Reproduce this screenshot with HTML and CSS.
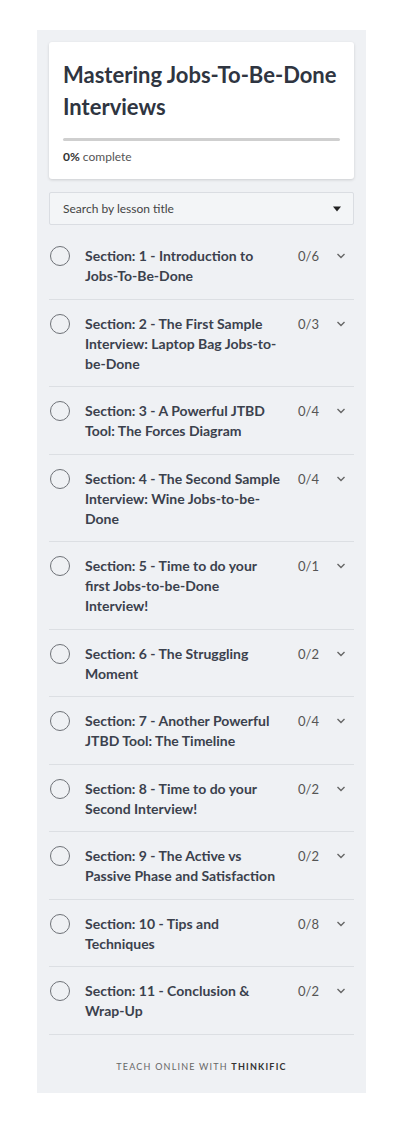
FILE: index.html
```html
<!DOCTYPE html>
<html>
<head>
<meta charset="utf-8">
<link rel="stylesheet" href="styles.css">
</head>
<body>
<div class="panel">
  <div class="card">
    <h1 class="title">Mastering Jobs-To-Be-Done Interviews</h1>
    <div class="bar"></div>
    <div class="progress"><b>0%</b> complete</div>
  </div>
  <div class="search">
    <span>Search by lesson title</span>
    <svg class="caret" width="10" height="6" viewBox="0 0 10 6"><path d="M1 0.5h8L5 5.5z" fill="#222"/></svg>
  </div>
  <ul class="list">
    <li class="row"><span class="circle"></span><span class="name">Section: 1 - Introduction to Jobs-To-Be-Done</span><span class="count">0/6</span><svg class="chev" viewBox="0 0 10 6"><path d="M1.5 1l3.5 3.5L8.5 1" fill="none" stroke="#666" stroke-width="1.4"/></svg></li>
    <li class="row"><span class="circle"></span><span class="name">Section: 2 - The First Sample Interview: Laptop Bag Jobs-to-be-Done</span><span class="count">0/3</span><svg class="chev" viewBox="0 0 10 6"><path d="M1.5 1l3.5 3.5L8.5 1" fill="none" stroke="#666" stroke-width="1.4"/></svg></li>
    <li class="row"><span class="circle"></span><span class="name">Section: 3 - A Powerful JTBD Tool: The Forces Diagram</span><span class="count">0/4</span><svg class="chev" viewBox="0 0 10 6"><path d="M1.5 1l3.5 3.5L8.5 1" fill="none" stroke="#666" stroke-width="1.4"/></svg></li>
    <li class="row"><span class="circle"></span><span class="name">Section: 4 - The Second Sample Interview: Wine Jobs-to-be-Done</span><span class="count">0/4</span><svg class="chev" viewBox="0 0 10 6"><path d="M1.5 1l3.5 3.5L8.5 1" fill="none" stroke="#666" stroke-width="1.4"/></svg></li>
    <li class="row"><span class="circle"></span><span class="name">Section: 5 - Time to do your first Jobs-to-be-Done Interview!</span><span class="count">0/1</span><svg class="chev" viewBox="0 0 10 6"><path d="M1.5 1l3.5 3.5L8.5 1" fill="none" stroke="#666" stroke-width="1.4"/></svg></li>
    <li class="row"><span class="circle"></span><span class="name">Section: 6 - The Struggling Moment</span><span class="count">0/2</span><svg class="chev" viewBox="0 0 10 6"><path d="M1.5 1l3.5 3.5L8.5 1" fill="none" stroke="#666" stroke-width="1.4"/></svg></li>
    <li class="row"><span class="circle"></span><span class="name">Section: 7 - Another Powerful JTBD Tool: The Timeline</span><span class="count">0/4</span><svg class="chev" viewBox="0 0 10 6"><path d="M1.5 1l3.5 3.5L8.5 1" fill="none" stroke="#666" stroke-width="1.4"/></svg></li>
    <li class="row"><span class="circle"></span><span class="name">Section: 8 - Time to do your Second Interview!</span><span class="count">0/2</span><svg class="chev" viewBox="0 0 10 6"><path d="M1.5 1l3.5 3.5L8.5 1" fill="none" stroke="#666" stroke-width="1.4"/></svg></li>
    <li class="row"><span class="circle"></span><span class="name">Section: 9 - The Active vs Passive Phase and Satisfaction</span><span class="count">0/2</span><svg class="chev" viewBox="0 0 10 6"><path d="M1.5 1l3.5 3.5L8.5 1" fill="none" stroke="#666" stroke-width="1.4"/></svg></li>
    <li class="row"><span class="circle"></span><span class="name">Section: 10 - Tips and Techniques</span><span class="count">0/8</span><svg class="chev" viewBox="0 0 10 6"><path d="M1.5 1l3.5 3.5L8.5 1" fill="none" stroke="#666" stroke-width="1.4"/></svg></li>
    <li class="row"><span class="circle"></span><span class="name">Section: 11 - Conclusion &amp; Wrap-Up</span><span class="count">0/2</span><svg class="chev" viewBox="0 0 10 6"><path d="M1.5 1l3.5 3.5L8.5 1" fill="none" stroke="#666" stroke-width="1.4"/></svg></li>
  </ul>
  <div class="footer">TEACH ONLINE WITH <b>THINKIFIC</b></div>
</div>
</body>
</html>
```
FILE: styles.css
```css
* { box-sizing: border-box; }
body {
  margin: 0;
  background: #ffffff;
  font-family: Lato, "Open Sans", sans-serif;
  color: #333a45;
}
.panel {
  margin: 30px 0 0 37px;
  width: 329px;
  height: 1063px;
  padding: 12px 12px 0;
  background: #eff1f4;
}
.card {
  background: #fff;
  border-radius: 3px;
  box-shadow: 0 1px 3px rgba(0,0,0,0.15);
  padding: 17px 14px 13px;
}
.title {
  margin: 0;
  font-size: 22px;
  line-height: 32px;
  font-weight: 700;
  color: #2f3541;
}
.bar {
  margin-top: 15px;
  height: 3px;
  background: #cfcfcf;
  border-radius: 2px;
}
.progress {
  margin-top: 7px;
  font-size: 12px;
  line-height: 18px;
  color: #555;
}
.progress b { color: #333; font-weight: 700; }
.search {
  margin-top: 13px;
  height: 33px;
  border: 1px solid #dadde2;
  border-radius: 2px;
  background: #f3f5f7;
  display: flex;
  align-items: center;
  justify-content: space-between;
  padding: 0 11px 0 13px;
  font-size: 12px;
  color: #444;
}
.list {
  list-style: none;
  margin: 7px 0 0;
  padding: 0;
}
.row {
  display: flex;
  align-items: flex-start;
  padding: 14px 0 12.5px;
  border-bottom: 1px solid #dcdfe3;
}
.circle {
  flex: none;
  width: 20px;
  height: 20px;
  margin-left: 1px;
  border: 1.6px solid #6e7177;
  border-radius: 50%;
}
.name {
  flex: none;
  width: 198px;
  margin-left: 15px;
  font-size: 14px;
  line-height: 20px;
  font-weight: 700;
  color: #3b414d;
}
.count {
  flex: none;
  margin-left: 15px;
  font-size: 13px;
  line-height: 20px;
  color: #555;
  width: 30px;
}
.chev {
  flex: none;
  width: 10px;
  height: 6px;
  margin: 7px 0 0 8px;
}
.footer {
  text-align: center;
  padding-top: 26px;
  font-size: 9px;
  letter-spacing: 1.2px;
  color: #666;
  line-height: 12px;
}
.footer b { color: #333; }
```
